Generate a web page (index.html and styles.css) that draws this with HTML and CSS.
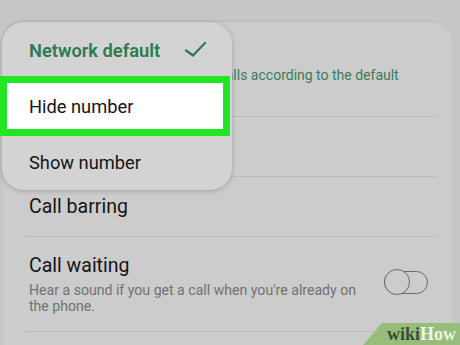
FILE: index.html
```html
<!DOCTYPE html>
<html>
<head>
<meta charset="utf-8">
<link rel="stylesheet" href="styles.css">
</head>
<body>
<div class="screen">
  <div class="card">
    <div class="row row-first">
      <div class="sub green">Show caller ID for all outgoing calls according to the default</div>
    </div>
    <div class="row row-plain"></div>
    <div class="row row-plain">
      <div class="title">Call barring</div>
    </div>
    <div class="row row-toggle">
      <div class="text">
        <div class="title">Call waiting</div>
        <div class="sub">Hear a sound if you get a call when you're already on the phone.</div>
      </div>
      <div class="toggle"><span class="knob"></span></div>
    </div>
  </div>

  <div class="popup">
    <div class="item item-selected">
      <span>Network default</span>
      <svg class="check" width="24" height="18" viewBox="0 0 24 18"><path d="M2 9.5 L9 14.5 L21 2" fill="none" stroke="#2b7a53" stroke-width="2.2" stroke-linecap="round" stroke-linejoin="round"/></svg>
    </div>
    <div class="item item-hl">
      <span class="hl"></span>
      <span class="label">Hide number</span>
    </div>
    <div class="item">
      <span>Show number</span>
    </div>
  </div>

  <div class="wm"><span class="wiki">wiki</span><span class="how">How</span></div>
</div>
</body>
</html>
```

FILE: styles.css
```css
html, body {
  margin: 0;
  padding: 0;
}
body {
  background: #c6c6c6;
  font-family: Roboto, "Noto Sans", sans-serif;
  width: 460px;
  height: 345px;
  overflow: hidden;
}
.screen {
  position: relative;
  width: 460px;
  height: 345px;
  padding-top: 22px;
  box-sizing: border-box;
}
.card {
  margin-left: 3px;
  width: 449px;
  height: 340px;
  background: #cccccc;
  border-radius: 20px 20px 0 0;
  padding: 0 16px 0 22px;
  box-sizing: border-box;
  box-shadow: 0 -1px 1px rgba(0,0,0,0.06);
}
.row {
  border-bottom: 1px solid #bcbcbc;
  padding-left: 4px;
}
.row-first {
  height: 95px;
  box-sizing: border-box;
  padding-top: 45px;
}
.row-plain {
  height: 60px;
  box-sizing: border-box;
  display: flex;
  align-items: center;
}
.row-toggle {
  height: 95px;
  box-sizing: border-box;
  display: flex;
  align-items: center;
  justify-content: space-between;
  padding-right: 8px;
}
.title {
  font-size: 19.5px;
  line-height: 24px;
  color: #151515;
}
.sub {
  font-size: 14.1px;
  line-height: 16px;
  color: #717171;
  margin-top: 4px;
  width: 340px;
}
.sub.green {
  color: #3b7d5a;
  font-size: 14px;
  line-height: 17px;
  width: auto;
  margin-top: 0;
  white-space: nowrap;
}
.toggle {
  position: relative;
  width: 44px;
  height: 23px;
  border: 1.5px solid #6a6a6a;
  border-radius: 12px;
  box-sizing: border-box;
  margin-top: -3px;
}
.knob {
  position: absolute;
  left: -1.5px;
  top: -3px;
  width: 26px;
  height: 26px;
  border: 1.5px solid #6a6a6a;
  border-radius: 50%;
  box-sizing: border-box;
  background: #cccccc;
}
.popup {
  position: absolute;
  left: 2px;
  top: 22px;
  width: 230px;
  height: 168px;
  background: #d3d3d3;
  border-radius: 22px;
  box-shadow: 0 1px 5px rgba(0,0,0,0.22);
}
.item {
  position: relative;
  height: 56px;
  display: flex;
  align-items: center;
  padding-left: 27px;
  font-size: 18.3px;
  color: #151515;
}
.item-selected {
  color: #2b7a53;
  font-weight: 600;
  justify-content: space-between;
  padding-right: 24px;
}
.hl {
  position: absolute;
  left: -2px;
  top: -2px;
  width: 230px;
  height: 60px;
  box-sizing: border-box;
  border: 7px solid #22e622;
  background: #ffffff;
}
.label {
  position: relative;
}
.wm {
  position: absolute;
  left: 363px;
  top: 323px;
  width: 97px;
  height: 22px;
  background: #97bd7b;
  clip-path: polygon(19px 0, 100% 0, 100% 100%, 0 100%);
  font-family: "Liberation Serif", serif;
  font-weight: bold;
  font-size: 18px;
  line-height: 22px;
  padding-left: 24px;
  box-sizing: border-box;
}
.wiki { color: #3d4a3b; }
.how { color: #eef3e8; }
```
